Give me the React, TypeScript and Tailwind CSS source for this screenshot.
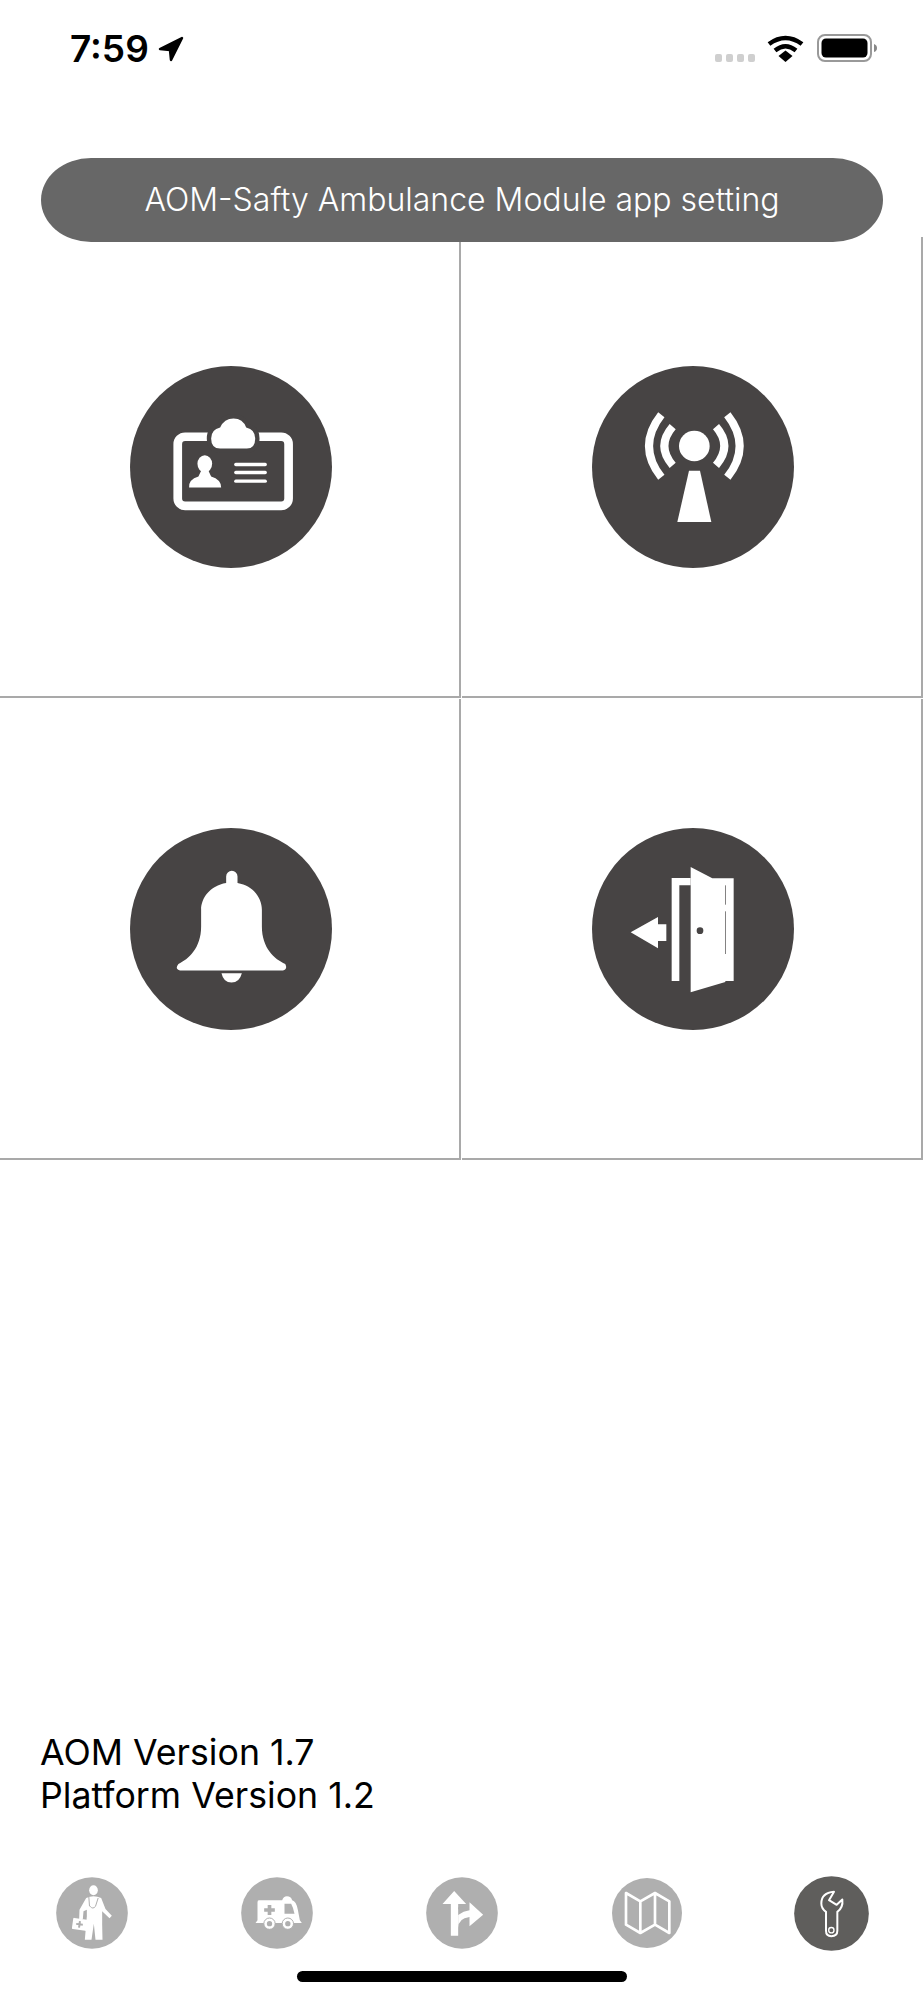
import React from 'react';

const DARK = '#474444';
const CLOUD = 'M300 295 Q273 295 273 265 Q273 238 300 232 Q312 205 340 205 Q368 205 378 232 Q405 238 405 265 Q405 295 380 295 Z';

const CardIcon = () => (
  <svg viewBox="30 48 605 605" className="w-[202px] h-[202px]">
    <circle cx="332.5" cy="350.5" r="302.5" fill={DARK} />
    <rect x="173" y="260" width="332" height="207" rx="22" fill="none" stroke="#fff" strokeWidth="26" />
    <path d={CLOUD} fill="#fff" stroke={DARK} strokeWidth="26" />
    <path d={CLOUD} fill="#fff" />
    <ellipse cx="254" cy="341" rx="22" ry="26" fill="#fff" />
    <path d="M207 412 Q205 388 235 379 L243 362 H265 L273 379 Q303 388 303 412 Z" fill="#fff" />
    <rect x="342" y="338" width="98" height="10" rx="5" fill="#fff" />
    <rect x="342" y="362" width="98" height="10" rx="5" fill="#fff" />
    <rect x="342" y="388" width="98" height="10" rx="5" fill="#fff" />
  </svg>
);

const AntennaIcon = () => (
  <svg viewBox="24 48 606 606" className="w-[202px] h-[202px]">
    <circle cx="327" cy="351" r="303" fill={DARK} />
    <circle cx="331" cy="288" r="46" fill="#fff" />
    <polygon points="315,362 348,362 382,516 280,516" fill="#fff" />
    <g fill="none" stroke="#fff" strokeWidth="24">
      <path d="M266 230 Q216 288 266 346" />
      <path d="M232 194 Q158 288 232 382" />
      <path d="M396 230 Q446 288 396 346" />
      <path d="M430 194 Q504 288 430 382" />
    </g>
  </svg>
);

const BellIcon = () => (
  <svg viewBox="30 25 605 605" className="w-[202px] h-[202px]">
    <circle cx="332.5" cy="327.5" r="302.5" fill={DARK} />
    <path d="M318 190 V170 A17 17 0 0 1 352 170 V190 C400 198 425 235 425 270 V320 C425 385 463 418 495 432 Q503 447 488 452 H180 Q163 447 175 432 C205 418 243 385 243 320 V270 C243 235 270 198 318 190 Z" fill="#fff" />
    <path d="M304 460 H365 Q358 488 334 488 Q310 488 304 460 Z" fill="#fff" />
  </svg>
);

const DoorIcon = () => (
  <svg viewBox="24 25 606 606" className="w-[202px] h-[202px]">
    <circle cx="327" cy="328" r="303" fill={DARK} />
    <polygon points="140,338 222,292 222,314 247,314 247,364 222,364 222,386" fill="#fff" />
    <path d="M263 175 H320 V197 H286 V484 H263 Z" fill="#fff" />
    <polygon points="320,142 385,176 449,176 449,484 424,484 424,487 320,518" fill="#fff" />
    <rect x="423" y="197" width="2" height="58" fill={DARK} />
    <rect x="423" y="275" width="2" height="128" fill={DARK} />
    <circle cx="348" cy="333" r="10" fill={DARK} />
  </svg>
);

const DoctorTab = () => (
  <svg viewBox="80 52 215 216" className="w-[72px] h-[72px]">
    <circle cx="187.5" cy="160" r="107.5" fill="#afafaf" />
    <ellipse cx="192" cy="92" rx="13" ry="15" fill="#fff" />
    <path d="M170 115 Q192 105 215 115 L228 148 L247 168 L240 176 L218 155 L218 195 L219 240 H198 L193 192 L186 240 H166 L172 170 L172 150 L162 155 L160 178 L149 178 L150 150 Z" fill="#fff" />
    <g transform="rotate(8 150 194)">
      <rect x="129" y="177" width="44" height="34" rx="3" fill="#fff" />
      <path d="M150 184 V204 M140 194 H160" stroke="#afafaf" strokeWidth="6" />
    </g>
    <path d="M178 112 L180 140 M206 115 L198 140 Q190 150 182 140" fill="none" stroke="#afafaf" strokeWidth="3" />
  </svg>
);

const AmbulanceTab = () => (
  <svg viewBox="635 52 215 216" className="w-[72px] h-[72px]">
    <circle cx="742.5" cy="160" r="107.5" fill="#afafaf" />
    <path d="M688 122 H758 Q762 110 772 110 Q785 110 788 122 Q800 125 805 150 L811 182 L817 190 H678 L684 182 V128 Q684 122 688 122 Z" fill="#fff" />
    <path d="M765 132 H785 Q792 145 795 162 H765 Z" fill="#afafaf" />
    <path d="M720 136 V166 M704 151 H736" stroke="#afafaf" strokeWidth="11" />
    <circle cx="720" cy="192" r="17" fill="#fff" stroke="#afafaf" strokeWidth="3" />
    <circle cx="720" cy="192" r="8" fill="#afafaf" />
    <circle cx="775" cy="192" r="17" fill="#fff" stroke="#afafaf" strokeWidth="3" />
    <circle cx="775" cy="192" r="8" fill="#afafaf" />
  </svg>
);

const RouteTab = () => (
  <svg viewBox="78 52 215 216" className="w-[72px] h-[72px]">
    <circle cx="185.5" cy="160" r="107.5" fill="#afafaf" />
    <polygon points="127,133 162,94 198,133 174,133 174,228 152,228 152,133" fill="#fff" />
    <path d="M174 228 V205 Q174 176 208 172 V200 L249 165 L208 128 V152 Q190 154 174 166 Z" fill="#fff" />
    <path d="M174 146 H186" stroke="#afafaf" strokeWidth="6" />
  </svg>
);

const MapTab = () => (
  <svg viewBox="633 55 210 210" className="w-[70px] h-[70px]">
    <circle cx="738" cy="160" r="105" fill="#afafaf" />
    <path d="M675 100 L718 125 L762 100 L805 125 V220 L762 195 L718 220 L675 195 Z M718 125 V220 M762 100 V195" fill="none" stroke="#fff" strokeWidth="8" strokeLinejoin="round" />
  </svg>
);

const WrenchTab = () => (
  <svg viewBox="280 48 225 224" className="w-[75px] h-[75px]">
    <circle cx="392.5" cy="160" r="112" fill="#5f5e5c" />
    <path d="M400 95 Q362 98 362 130 Q362 145 376 155 V212 Q376 228 392 228 Q410 228 410 212 V155 Q428 142 425 118 L408 134 L385 120 Z" fill="none" stroke="#fff" strokeWidth="6" strokeLinejoin="round" />
    <circle cx="392" cy="210" r="8" fill="none" stroke="#fff" strokeWidth="4" />
  </svg>
);

const StatusRight = () => (
  <div className="flex items-center">
    <div className="flex gap-[4px] mt-[19px]">
      <div className="w-[7px] h-[8px] rounded-[2px] bg-[#cfcfcf]" />
      <div className="w-[7px] h-[8px] rounded-[2px] bg-[#cfcfcf]" />
      <div className="w-[7px] h-[8px] rounded-[2px] bg-[#cfcfcf]" />
      <div className="w-[7px] h-[8px] rounded-[2px] bg-[#cfcfcf]" />
    </div>
    <svg viewBox="0 0 37 27" className="w-[37px] h-[27px] ml-[12px]">
      <path d="M2 9 Q18.5 -3 35 9" fill="none" stroke="#000" strokeWidth="4.6" />
      <path d="M8 15.5 Q18.5 7 29 15.5" fill="none" stroke="#000" strokeWidth="4.4" />
      <path d="M11.5 21 L18.5 15.5 L25.5 21 L18.5 27 Z" fill="#000" />
    </svg>
    <svg viewBox="0 0 60 28" className="w-[60px] h-[28px] ml-[13px]">
      <rect x="1" y="1" width="53" height="26" rx="7" fill="none" stroke="#999" strokeWidth="2" />
      <rect x="4.5" y="4.5" width="46" height="19" rx="4.5" fill="#000" />
      <path d="M57 10 Q60 11 60 14 Q60 17 57 18 Z" fill="#888" />
    </svg>
  </div>
);

export default function App() {
  const cells = [<CardIcon />, <AntennaIcon />, <BellIcon />, <DoorIcon />];
  const tabs = [<DoctorTab />, <AmbulanceTab />, <RouteTab />, <MapTab />, <WrenchTab />];

  return (
    <div className="w-[924px] h-[2000px] bg-white flex flex-col overflow-hidden" style={{ fontFamily: 'Inter, sans-serif' }}>
      {/* status bar */}
      <div className="h-[158px] pt-[27px] pl-[70px] pr-[47px] flex justify-between items-start">
        <div className="flex items-center">
          <span className="text-[37px] leading-[44px] font-semibold text-black">7:59</span>
          <svg viewBox="0 0 26 26" className="w-[26px] h-[26px] ml-[9px] mt-[-1px]">
            <path d="M24 2 L2 13 L12 14 L13 24 Z" fill="#000" stroke="#000" strokeWidth="2.5" strokeLinejoin="round" />
          </svg>
        </div>
        <div className="mt-[7px]">
          <StatusRight />
        </div>
      </div>

      {/* title */}
      <div className="relative z-10 mx-[41px] -mb-[5px] h-[84px] rounded-[50px/42px] bg-[#676767] flex items-center justify-center">
        <span className="text-[32px] font-light text-white">AOM-Safty Ambulance Module app setting</span>
      </div>

      {/* settings grid */}
      <div className="grid grid-cols-[461px_461px] grid-rows-[461px_461px] gap-px">
        {cells.map((icon, i) => (
          <div key={i} className="flex items-center justify-center pl-[2px] pt-[1px] border-r-2 border-b-2 border-[#a9a9a9]">
            {icon}
          </div>
        ))}
      </div>

      <div className="flex-1" />

      {/* versions */}
      <div className="pl-[40px] text-[35.7px] leading-[43px] text-black">
        <p>AOM Version 1.7</p>
        <p>Platform Version 1.2</p>
      </div>

      {/* tab bar */}
      <div className="grid grid-cols-5 h-[76px] mt-[58px]">
        {tabs.map((icon, i) => (
          <div key={i} className="flex items-center justify-center">
            {icon}
          </div>
        ))}
      </div>

      <div className="flex justify-center mt-[20px] mb-[18px]">
        <div className="w-[330px] h-[11px] rounded-full bg-black" />
      </div>
    </div>
  );
}
